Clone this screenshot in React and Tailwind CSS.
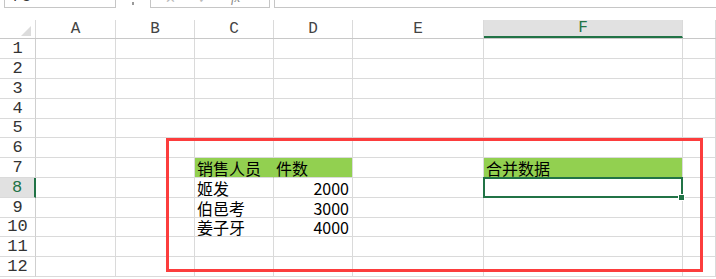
import React from 'react';

// column widths, as literal classes so tailwind picks them up
const cols = [
    { key: 'A', w: 'w-[80px]' },
    { key: 'B', w: 'w-[79px]' },
    { key: 'C', w: 'w-[79px]' },
    { key: 'D', w: 'w-[79px]' },
    { key: 'E', w: 'w-[131px]' },
    { key: 'F', w: 'w-[199px]' },
    { key: 'G', w: 'flex-1' },
];

const rowHeights = ['h-[20px]', 'h-[20px]', 'h-[20px]', 'h-[20px]', 'h-[19px]', 'h-[20px]', 'h-[20px]', 'h-[20px]', 'h-[20px]', 'h-[19px]', 'h-[20px]', 'h-[20px]'];

// sheet contents, keyed by row then column
const cells = {
    7: { C: '销售人员', D: '件数', F: '合并数据' },
    8: { C: '姬发', D: 2000 },
    9: { C: '伯邑考', D: 3000 },
    10: { C: '姜子牙', D: 4000 },
};

const greenCells = { 7: ['C', 'D', 'F'] };

const hdrFont = { fontFamily: '"Liberation Mono", "Courier New", monospace' };
const cellFont = { fontFamily: '"Noto Sans CJK SC", "Noto Sans", sans-serif' };

const Cell = ({ row, col }) => {
    const value = cells[row]?.[col.key];
    const isGreen = greenCells[row]?.includes(col.key);
    const isNumber = typeof value === 'number';
    const selected = row === 8 && col.key === 'F';

    return (
        <div
            className={`${col.w} relative h-full flex items-end border-r border-b border-[#dadada] ${isGreen ? 'bg-[#92d050]' : 'bg-white'} ${isGreen && col.key === 'C' ? 'border-r-[#92d050]' : ''} ${isNumber ? 'justify-end pr-[3px]' : 'pl-[2px]'}`}
        >
            {value !== undefined && (
                <span className="text-[16px] leading-[18px] text-black whitespace-nowrap" style={cellFont}>{value}</span>
            )}
            {selected && (
                <>
                    <div className="absolute z-10 -left-[1px] -top-[1px] -right-[1px] -bottom-[1px] border-2 border-[#217346]"></div>
                    <div className="absolute z-20 -right-[3px] -bottom-[4px] w-[7px] h-[7px] bg-[#217346] border border-white"></div>
                </>
            )}
        </div>
    );
};

const App = () => {
    return (
        <div className="w-[716px] h-[279px] bg-white relative overflow-hidden">
            {/* formula bar strip, mostly scrolled off the top */}
            <div className="flex h-[20px]">
                <div className="ml-[4px] w-[112px] h-[8px] border border-t-0 border-[#c6c6c6] overflow-hidden pl-[8px]">
                    <div className="-mt-[11px] text-[15px] leading-[18px] text-[#333]" style={hdrFont}>F8</div>
                </div>
                <div className="w-[34px] flex justify-center">
                    <div className="w-[2px] h-[3px] mt-[2px] bg-[#9a9a9a]"></div>
                </div>
                <div className="w-[120px] h-[8px] border border-t-0 border-[#c6c6c6] overflow-hidden flex gap-[22px] pl-[14px]">
                    <div className="-mt-[10px] text-[13px] leading-[16px] text-[#bbb]">✕</div>
                    <div className="-mt-[10px] text-[13px] leading-[16px] text-[#bbb]">✓</div>
                    <div className="-mt-[10px] text-[13px] leading-[16px] italic text-[#888]" style={{ fontFamily: '"Liberation Serif", serif' }}>fx</div>
                </div>
                <div className="ml-[4px] flex-1 h-[8px] border-l border-b border-[#c6c6c6]"></div>
            </div>

            {/* column headers */}
            <div className="flex h-[19px] border-b border-[#c8c8c8]">
                <div className="w-[36px] h-full border-r border-[#dadada] flex items-end justify-end pr-[4px] pb-[2px]">
                    <svg width="10" height="10" viewBox="0 0 10 10">
                        <polygon points="10,0 10,10 0,10" fill="#dcdcdc" />
                    </svg>
                </div>
                {cols.map(col => (
                    <div
                        key={col.key}
                        className={`${col.w} h-full flex items-center justify-center border-r border-[#dadada] text-[16px] leading-[18px] ${col.key === 'F' ? 'bg-[#e1e1e1] text-[#217346] border-b-2 border-b-[#217346]' : 'text-[#444]'}`}
                        style={hdrFont}
                    >
                        {col.key === 'G' ? '' : col.key}
                    </div>
                ))}
            </div>

            {/* rows */}
            {rowHeights.map((h, i) => {
                const row = i + 1;
                const active = row === 8;
                return (
                    <div key={row} className={`flex ${h}`}>
                        <div
                            className={`w-[36px] h-full flex items-center justify-center border-b border-[#dadada] text-[17px] leading-[18px] ${active ? 'bg-[#e1e1e1] text-[#217346] border-r-2 border-r-[#217346]' : 'text-[#333] border-r border-r-[#cfcfcf]'}`}
                            style={hdrFont}
                        >
                            {row}
                        </div>
                        {cols.map(col => (
                            <Cell key={col.key} row={row} col={col} />
                        ))}
                    </div>
                );
            })}

            {/* red annotation box drawn over the sheet */}
            <div className="absolute z-30 left-[166px] top-[138px] w-[537px] h-[134px] border-[3px] border-[#fc3d3d] pointer-events-none"></div>
        </div>
    );
};

export default App;
